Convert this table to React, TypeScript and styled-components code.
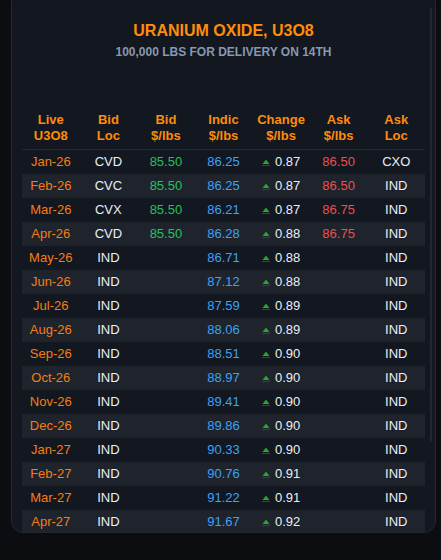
import React from "react";
import styled, { createGlobalStyle } from "styled-components";

const Global = createGlobalStyle`
  html, body { margin: 0; padding: 0; background: #0b0d11; }
  body { font-family: "Liberation Sans", Arial, sans-serif; overflow: hidden; }
`;

const Page = styled.div`
  width: 441px;
  height: 560px;
  overflow: hidden;
`;

const Card = styled.section`
  position: relative;
  box-sizing: border-box;
  margin: -10px 0 0 11px;
  width: 425px;
  height: 543px;
  background: #13171f;
  border: 1px solid #222732;
  border-radius: 12px;
  overflow: hidden;
  padding: 30px 10px 0 10px;
`;

const ScrollThumb = styled.div`
  position: absolute;
  right: 3px;
  top: 17px;
  width: 2px;
  height: 434px;
  background: #222833;
  border-radius: 1px;
`;

const Title = styled.h1`
  margin: 0;
  text-align: center;
  font-size: 16px;
  line-height: 20px;
  font-weight: 700;
  color: #ff8c0a;
`;

const Subtitle = styled.div`
  margin-top: 3px;
  text-align: center;
  font-size: 12px;
  line-height: 16px;
  font-weight: 700;
  color: #8798b1;
`;

const Table = styled.div`
  margin-top: 48px;
  width: 403px;
`;

const Row = styled.div<{ $alt?: boolean }>`
  display: grid;
  grid-template-columns: repeat(7, 1fr);
  height: 24px;
  align-items: center;
  background: ${(p) => (p.$alt ? "#1e232c" : "transparent")};
`;

const HeadRow = styled.div`
  display: grid;
  grid-template-columns: repeat(7, 1fr);
  padding: 4px 0 5px;
  border-bottom: 1px solid #242934;
`;

const HeadCell = styled.div`
  text-align: center;
  font-size: 13px;
  line-height: 16px;
  font-weight: 700;
  color: #ff8c0a;
`;

const Cell = styled.div<{ $tone?: "month" | "white" | "green" | "blue" | "red" }>`
  text-align: center;
  font-size: 13px;
  line-height: 16px;
  color: ${(p) =>
    p.$tone === "month"
      ? "#f57d14"
      : p.$tone === "green"
      ? "#25c160"
      : p.$tone === "blue"
      ? "#3fa0f6"
      : p.$tone === "red"
      ? "#f04e4e"
      : "#e8eef8"};
`;

const Change = styled.div`
  display: flex;
  justify-content: center;
  align-items: baseline;
  gap: 5px;
  font-size: 13px;
  line-height: 16px;
  color: #e8eef8;
`;

const Arrow = styled.svg`
  width: 8px;
  height: 7px;
  flex: none;
`;

const UpArrow = () => (
  <Arrow viewBox="0 0 8 7">
    <polygon points="4,0.5 7.5,5 0.5,5" fill="#1fa83a" />
    <rect x="0" y="6" width="8" height="1" fill="#3a404a" />
  </Arrow>
);

type R = [string, string, string, string, string, string, string];

const rows: R[] = [
  ["Jan-26", "CVD", "85.50", "86.25", "0.87", "86.50", "CXO"],
  ["Feb-26", "CVC", "85.50", "86.25", "0.87", "86.50", "IND"],
  ["Mar-26", "CVX", "85.50", "86.21", "0.87", "86.75", "IND"],
  ["Apr-26", "CVD", "85.50", "86.28", "0.88", "86.75", "IND"],
  ["May-26", "IND", "", "86.71", "0.88", "", "IND"],
  ["Jun-26", "IND", "", "87.12", "0.88", "", "IND"],
  ["Jul-26", "IND", "", "87.59", "0.89", "", "IND"],
  ["Aug-26", "IND", "", "88.06", "0.89", "", "IND"],
  ["Sep-26", "IND", "", "88.51", "0.90", "", "IND"],
  ["Oct-26", "IND", "", "88.97", "0.90", "", "IND"],
  ["Nov-26", "IND", "", "89.41", "0.90", "", "IND"],
  ["Dec-26", "IND", "", "89.86", "0.90", "", "IND"],
  ["Jan-27", "IND", "", "90.33", "0.90", "", "IND"],
  ["Feb-27", "IND", "", "90.76", "0.91", "", "IND"],
  ["Mar-27", "IND", "", "91.22", "0.91", "", "IND"],
  ["Apr-27", "IND", "", "91.67", "0.92", "", "IND"],
];

const heads: [string, string][] = [
  ["Live", "U3O8"],
  ["Bid", "Loc"],
  ["Bid", "$/lbs"],
  ["Indic", "$/lbs"],
  ["Change", "$/lbs"],
  ["Ask", "$/lbs"],
  ["Ask", "Loc"],
];

export default function App() {
  return (
    <Page>
      <Global />
      <Card>
        <ScrollThumb />
        <Title>URANIUM OXIDE, U3O8</Title>
        <Subtitle>100,000 LBS FOR DELIVERY ON 14TH</Subtitle>
        <Table>
          <HeadRow>
            {heads.map(([a, b], i) => (
              <HeadCell key={i}>
                {a}
                <br />
                {b}
              </HeadCell>
            ))}
          </HeadRow>
          {rows.map((r, i) => (
            <Row key={r[0]} $alt={i % 2 === 1}>
              <Cell $tone="month">{r[0]}</Cell>
              <Cell $tone="white">{r[1]}</Cell>
              <Cell $tone="green">{r[2]}</Cell>
              <Cell $tone="blue">{r[3]}</Cell>
              <Change>
                <UpArrow />
                <span>{r[4]}</span>
              </Change>
              <Cell $tone="red">{r[5]}</Cell>
              <Cell $tone="white">{r[6]}</Cell>
            </Row>
          ))}
        </Table>
      </Card>
    </Page>
  );
}
